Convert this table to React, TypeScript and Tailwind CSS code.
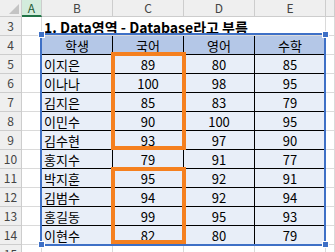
import React from 'react';

const rows: [string, number, number, number][] = [
  ['이지은', 89, 80, 85],
  ['이나나', 100, 98, 95],
  ['김지은', 85, 83, 79],
  ['이민수', 90, 100, 95],
  ['김수현', 93, 97, 90],
  ['홍지수', 79, 91, 77],
  ['박지훈', 95, 92, 91],
  ['김범수', 94, 92, 94],
  ['홍길동', 99, 95, 93],
  ['이현수', 82, 80, 79],
];

const font = { fontFamily: '"Noto Sans CJK KR", "Noto Sans", sans-serif' };

const rowHead = 'bg-[#efefef] border-r border-b border-[#cdcdcd] text-[#444] text-[12px] leading-none flex items-center justify-center';
const colHead = 'bg-[#efefef] border-r border-b border-[#cdcdcd] text-[#444] text-[12px] leading-none flex items-center justify-center';
const blank = 'border-r border-b border-[#dadada]';
const thCell = 'bg-[#b4c7e7] border-r border-b border-black text-[13px] leading-none flex items-center justify-center text-black';
const tdCell = 'bg-[#e8eef8] border-r border-b border-black text-[13px] leading-none flex items-center text-black';

const App: React.FC = () => {
  return (
    <div className="w-[335px] h-[252px] overflow-hidden bg-white relative" style={font}>
      <div className="grid grid-cols-[22px_20px_71px_71px_71px_71px_1fr] grid-rows-[17px] auto-rows-[19px]">
        {/* column headers */}
        <div className={`${colHead} relative`}>
          <svg width="22" height="17" className="absolute inset-0">
            <polygon points="19,4 19,14 9,14" fill="#c4c4c4" />
          </svg>
        </div>
        <div className="bg-[#d3ecdc] border-r border-[#cdcdcd] border-b-2 border-b-[#217346] text-[#1e5b36] text-[12px] leading-none flex items-center justify-center">A</div>
        <div className={colHead}>B</div>
        <div className={colHead}>C</div>
        <div className={colHead}>D</div>
        <div className={colHead}>E</div>
        <div className={colHead}></div>

        {/* row 3: title */}
        <div className={rowHead}>3</div>
        <div className={blank}></div>
        <div className={`${blank} col-span-4 flex items-center pl-[2px] pt-[1px] whitespace-nowrap text-[14px] font-bold text-black leading-none`}>
          1. Data영역 - Database라고 부름
        </div>
        <div className={blank}></div>

        {/* row 4: table header */}
        <div className={rowHead}>4</div>
        <div className={blank}></div>
        <div className={thCell}>학생</div>
        <div className={thCell}>국어</div>
        <div className={thCell}>영어</div>
        <div className={thCell}>수학</div>
        <div className={blank}></div>

        {rows.map(([name, kor, eng, math], i) => (
          <React.Fragment key={name}>
            <div className={rowHead}>{i + 5}</div>
            <div className={blank}></div>
            <div className={`${tdCell} justify-start pl-[2px] pt-[1px]`}>{name}</div>
            <div className={`${tdCell} justify-center pt-[1px]`}>{kor}</div>
            <div className={`${tdCell} justify-center pt-[1px]`}>{eng}</div>
            <div className={`${tdCell} justify-center pt-[1px]`}>{math}</div>
            <div className={blank}></div>
          </React.Fragment>
        ))}

        <div className={rowHead}>15</div>
        <div className={blank}></div>
        <div className={blank}></div>
        <div className={blank}></div>
        <div className={blank}></div>
        <div className={blank}></div>
        <div className={blank}></div>
      </div>

      {/* range frame with handles */}
      <div className="absolute left-[40px] top-[33px] w-[286px] h-[213px] border-2 border-[#3e70c6]"></div>
      <div className="absolute left-[38px] top-[31px] w-[7px] h-[7px] bg-[#3e70c6] border border-white"></div>
      <div className="absolute left-[322px] top-[31px] w-[7px] h-[7px] bg-[#3e70c6] border border-white"></div>
      <div className="absolute left-[38px] top-[241px] w-[7px] h-[7px] bg-[#3e70c6] border border-white"></div>
      <div className="absolute left-[322px] top-[241px] w-[7px] h-[7px] bg-[#3e70c6] border border-white"></div>

      {/* orange highlight boxes */}
      <div className="absolute left-[111px] top-[52px] w-[75px] h-[98px] border-4 border-[#f5801f]"></div>
      <div className="absolute left-[111px] top-[167px] w-[75px] h-[77px] border-4 border-[#f5801f]"></div>
    </div>
  );
};

export default App;
